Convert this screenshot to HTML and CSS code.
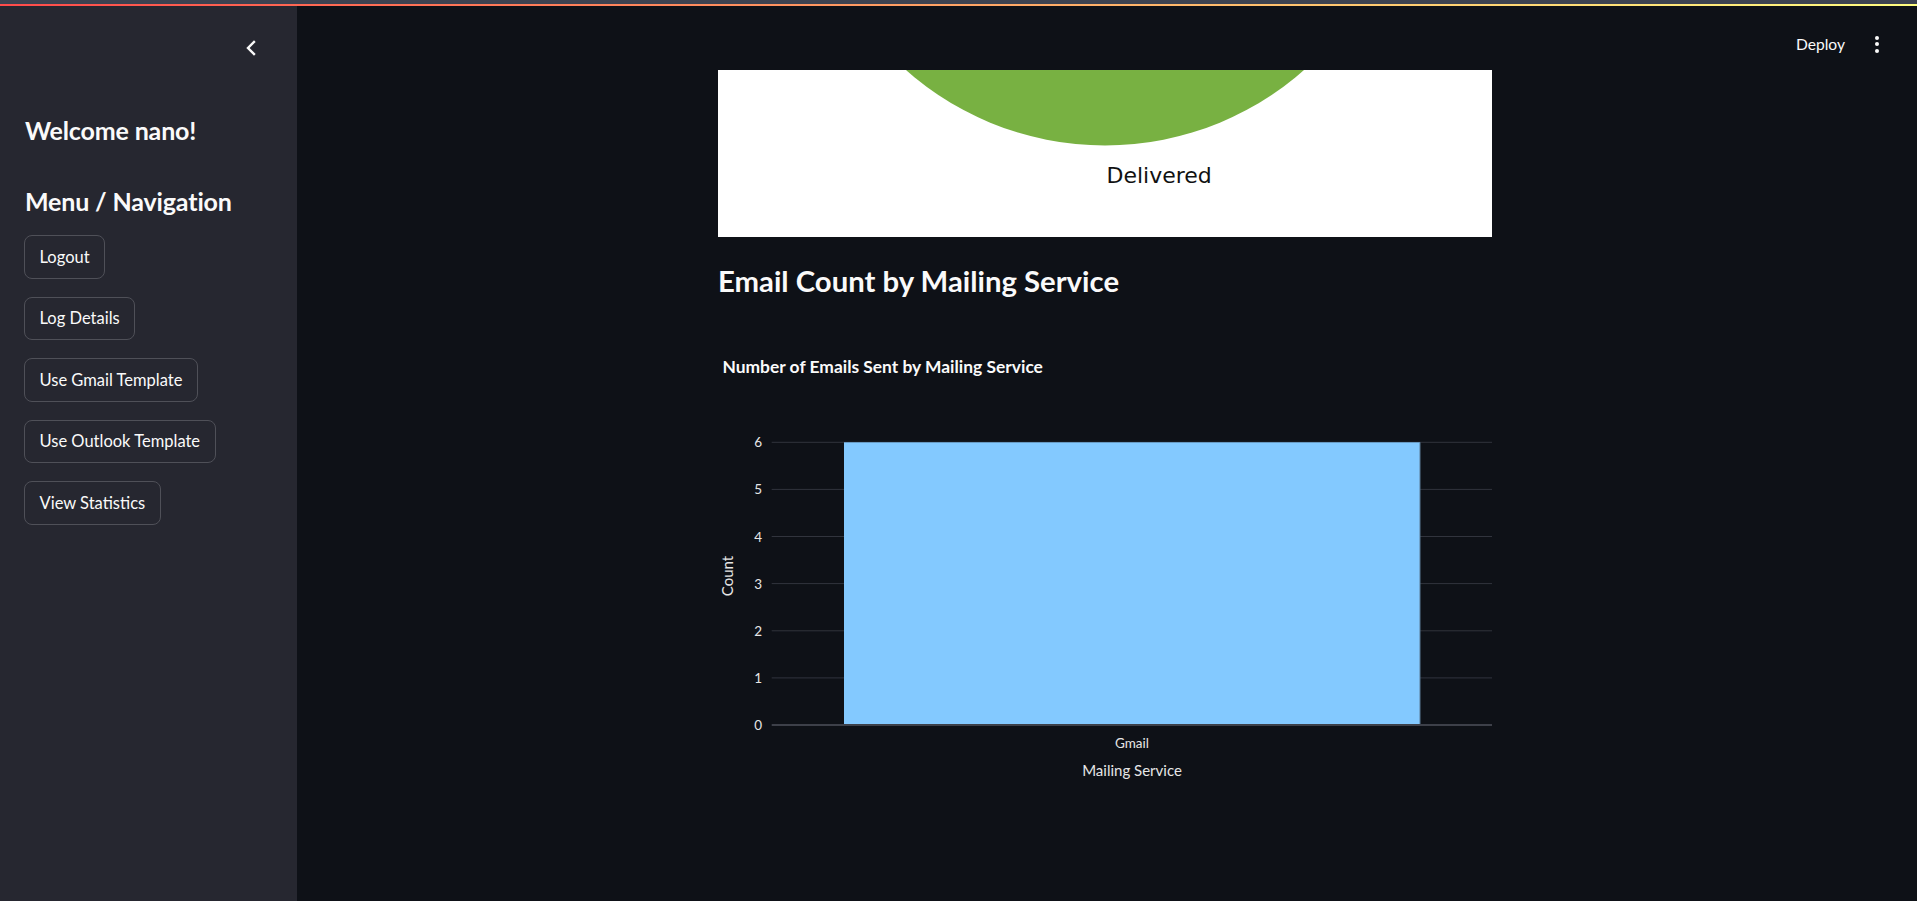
FILE: index.html
```html
<!DOCTYPE html>
<html>
<head>
<meta charset="utf-8">
<link rel="stylesheet" href="styles.css">
</head>
<body>
<div class="topstrip"></div>
<div class="deco"></div>
<div class="app">
  <aside class="sidebar">
    <div class="sb-header">
      <svg class="chev" width="12" height="16" viewBox="0 0 12 16"><path d="M9 2 L3 8 L9 14" fill="none" stroke="#fafafa" stroke-width="2.4" stroke-linecap="square"/></svg>
    </div>
    <h3 class="sb-h welcome">Welcome nano!</h3>
    <h3 class="sb-h menu">Menu / Navigation</h3>
    <div class="btns">
      <button class="btn">Logout</button>
      <button class="btn">Log Details</button>
      <button class="btn">Use Gmail Template</button>
      <button class="btn">Use Outlook Template</button>
      <button class="btn">View Statistics</button>
    </div>
  </aside>
  <main class="main">
    <div class="main-header">
      <span class="deploy">Deploy</span>
      <span class="kebab"><i></i><i></i><i></i></span>
    </div>
    <div class="main-body">
      <div class="column">
        <div class="pie">
          <svg width="774" height="167" viewBox="0 0 774 167">
            <circle cx="387" cy="-224.5" r="300" fill="#78b142"/>
            <text x="388.5" y="113" class="pie-label">Delivered</text>
          </svg>
        </div>
        <h2 class="section-title">Email Count by Mailing Service</h2>
        <div class="chart">
          <svg width="774" height="460" viewBox="0 0 774 460">
            <text x="4.5" y="33" class="chart-title">Number of Emails Sent by Mailing Service</text>
            <g class="grid">
              <line x1="53.7" x2="774" y1="102.3" y2="102.3"/>
              <line x1="53.7" x2="774" y1="149.4" y2="149.4"/>
              <line x1="53.7" x2="774" y1="196.5" y2="196.5"/>
              <line x1="53.7" x2="774" y1="243.6" y2="243.6"/>
              <line x1="53.7" x2="774" y1="290.8" y2="290.8"/>
              <line x1="53.7" x2="774" y1="337.9" y2="337.9"/>
            </g>
            <rect x="126" y="102.3" width="576" height="282.7" fill="#83c9ff"/>
            <line x1="702" x2="702" y1="102.3" y2="385" stroke="#5b7a94" stroke-width="1"/>
            <line x1="53.7" x2="774" y1="385" y2="385" stroke="#3d4049" stroke-width="2"/>
            <g class="ticks">
              <text x="44" y="107.3">6</text>
              <text x="44" y="154.4">5</text>
              <text x="44" y="201.5">4</text>
              <text x="44" y="248.6">3</text>
              <text x="44" y="295.8">2</text>
              <text x="44" y="342.9">1</text>
              <text x="44" y="390">0</text>
            </g>
            <text class="axis-title" transform="translate(15 236) rotate(-90)" text-anchor="middle">Count</text>
            <text class="xtick" x="414" y="408" text-anchor="middle">Gmail</text>
            <text class="axis-title" x="414" y="436" text-anchor="middle">Mailing Service</text>
          </svg>
        </div>
      </div>
    </div>
  </main>
</div>
</body>
</html>
```

FILE: styles.css
```css
html, body {
  margin: 0;
  padding: 0;
  background: #0e1117;
  width: 1917px;
  height: 901px;
  overflow: hidden;
  font-family: "Source Sans Pro", Lato, sans-serif;
  color: #fafafa;
}
.topstrip {
  height: 4px;
  background: #3c4250;
}
.deco {
  height: 2px;
  background: linear-gradient(90deg, #ff4b4b, #fffd80);
}
.app {
  display: flex;
  height: 895px;
}
.sidebar {
  width: 297px;
  flex: none;
  background: #262730;
  box-sizing: border-box;
  padding-left: 24px;
  display: flex;
  flex-direction: column;
}
.sb-header {
  height: 84px;
  display: flex;
  justify-content: flex-end;
  align-items: flex-start;
  padding-right: 40px;
}
.chev {
  margin-top: 34px;
}
.sb-h {
  margin: 0;
  font-size: 25px;
  letter-spacing: -0.15px;
  font-weight: 700;
  line-height: 34px;
  padding-left: 1px;
}
.welcome {
  margin-top: 23px;
}
.menu {
  margin-top: 37px;
}
.btns {
  margin-top: 17px;
  display: flex;
  flex-direction: column;
  align-items: flex-start;
  gap: 18px;
}
.btn {
  font-family: "Source Sans Pro", Lato, sans-serif;
  font-size: 16.5px;
  color: #fafafa;
  background: #262730;
  border: 1px solid #4f5058;
  border-radius: 8px;
  height: 43.5px;
  padding: 0 14.5px;
  line-height: 1;
}
.main {
  flex: 1;
  display: flex;
  flex-direction: column;
  background: #0e1117;
}
.main-header {
  height: 64px;
  display: flex;
  justify-content: flex-end;
  align-items: center;
  padding-right: 38px;
  flex: none;
}
.deploy {
  font-size: 15.6px;
  margin-right: 30px;
  margin-top: 12px;
}
.kebab {
  display: flex;
  flex-direction: column;
  gap: 2.5px;
  margin-top: 12px;
}
.kebab i {
  display: block;
  width: 4px;
  height: 4px;
  border-radius: 50%;
  background: #fafafa;
}
.main-body {
  display: flex;
  justify-content: center;
  padding-right: 4px;
}
.column {
  width: 774px;
  display: flex;
  flex-direction: column;
}
.pie {
  background: #ffffff;
  height: 167px;
  overflow: hidden;
}
.pie svg {
  display: block;
}
.pie-label {
  font-family: "DejaVu Sans", sans-serif;
  font-size: 22px;
  fill: #111;
}
.section-title {
  margin: 0;
  font-size: 29.3px;
  font-weight: 700;
  line-height: 40px;
  margin-top: 24px;
}
.chart {
  margin-top: 39px;
}
.chart svg {
  display: block;
  font-family: "Source Sans Pro", Lato, sans-serif;
}
.chart-title {
  font-size: 17.4px;
  font-weight: 700;
  fill: #fafafa;
}
.grid line {
  stroke: #31343d;
  stroke-width: 1;
}
.ticks text {
  font-size: 13.5px;
  fill: #e6e6e6;
  text-anchor: end;
}
.axis-title {
  font-size: 15px;
  fill: #e6e6e6;
}
.xtick {
  font-size: 13.5px;
  fill: #e6e6e6;
}
```
